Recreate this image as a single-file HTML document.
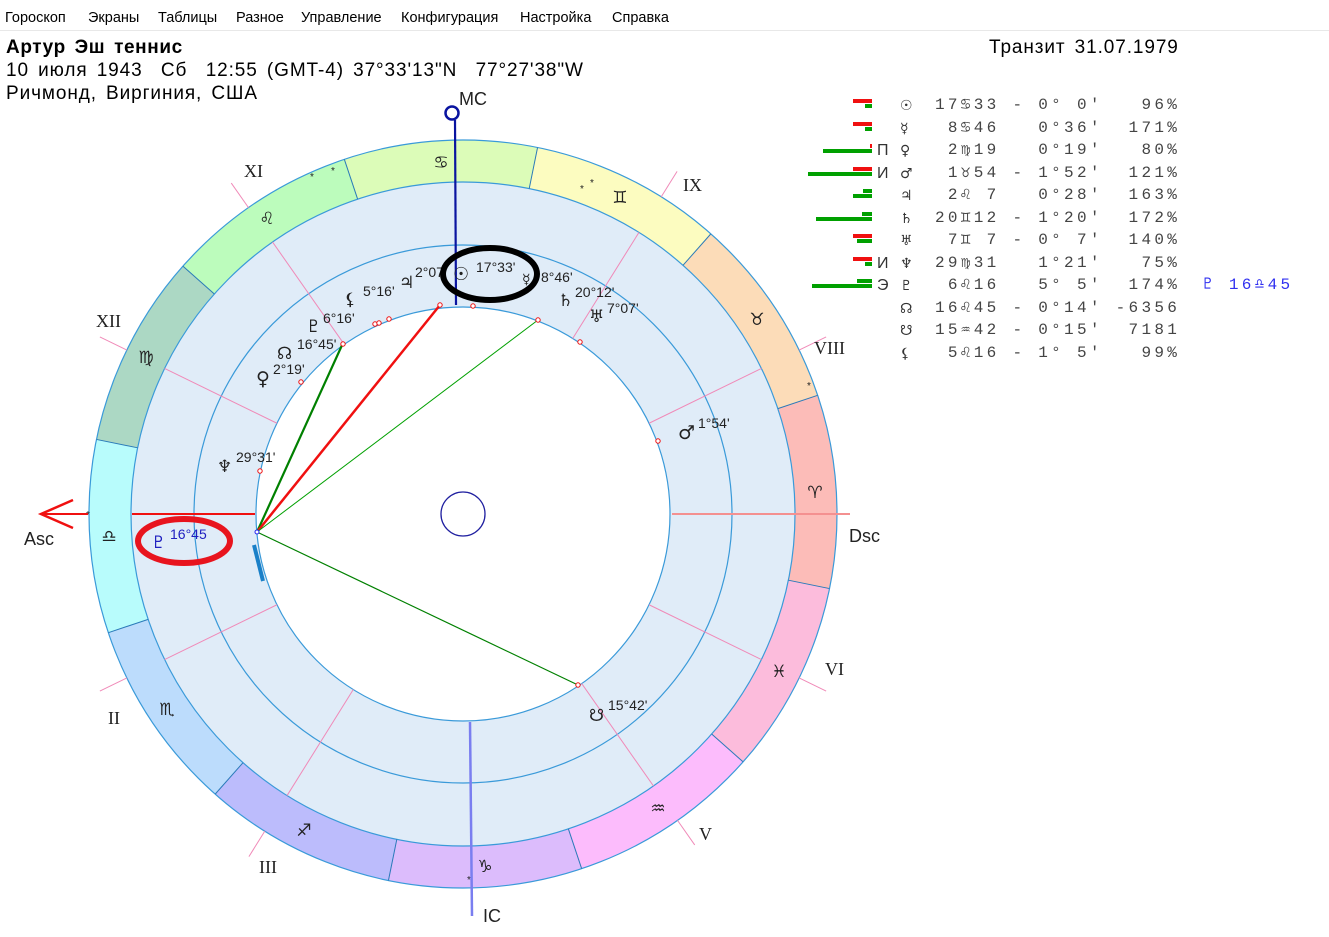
<!DOCTYPE html>
<html style="overflow:hidden"><head><meta charset="utf-8">
<style>
html,body{margin:0;width:1329px;height:937px;overflow:hidden;}
body{background:#fff;position:relative;font-family:"Liberation Sans","DejaVu Sans",sans-serif;}
.menu{position:absolute;left:0;top:0;width:1329px;height:30px;border-bottom:1px solid #e8e8e8;font-size:14.5px;color:#000;}
.menu span{position:absolute;top:10px;}
.hd{position:absolute;left:6px;font-size:19px;letter-spacing:0.9px;word-spacing:3px;color:#000;white-space:nowrap;}
svg{position:absolute;left:0;top:0;}
.tb{position:absolute;font-family:"Liberation Mono","DejaVu Sans Mono",monospace;font-size:16px;color:#444;white-space:pre;}
.bar{position:absolute;height:4px;}
.r{background:#f01010}.g{background:#00a000}
</style></head><body>
<div class="menu">
<span style="left:5px">Гороскоп</span><span style="left:88px">Экраны</span><span style="left:158px">Таблицы</span><span style="left:236px">Разное</span><span style="left:301px">Управление</span><span style="left:401px">Конфигурация</span><span style="left:520px">Настройка</span><span style="left:612px">Справка</span>
</div>
<div class="hd" style="top:37px;font-weight:bold;letter-spacing:0.6px">Артур Эш теннис</div>
<div class="hd" style="top:60px">10 июля 1943&nbsp; Сб&nbsp; 12:55 (GMT-4) 37°33'13"N&nbsp; 77°27'38"W</div>
<div class="hd" style="top:83px">Ричмонд, Виргиния, США</div>
<div class="hd" style="top:37px;left:989px">Транзит 31.07.1979</div>

<svg width="1329" height="937" viewBox="0 0 1329 937">
<g font-family="Liberation Sans, DejaVu Sans, sans-serif">
<circle cx="463" cy="514" r="374" fill="#e0ecf8"/>
<g transform="translate(463,514)" fill="none" stroke-width="42">
<circle r="353" stroke="#fcbcb8" stroke-dasharray="184.83 3000" transform="rotate(-18.5)"/>
<circle r="353" stroke="#fcdcb8" stroke-dasharray="184.83 3000" transform="rotate(-48.5)"/>
<circle r="353" stroke="#fcfcc0" stroke-dasharray="184.83 3000" transform="rotate(-78.5)"/>
<circle r="353" stroke="#dcfcb8" stroke-dasharray="184.83 3000" transform="rotate(-108.5)"/>
<circle r="353" stroke="#bcfcbc" stroke-dasharray="184.83 3000" transform="rotate(-138.5)"/>
<circle r="353" stroke="#acd8c4" stroke-dasharray="184.83 3000" transform="rotate(-168.5)"/>
<circle r="353" stroke="#b8fcfc" stroke-dasharray="184.83 3000" transform="rotate(-198.5)"/>
<circle r="353" stroke="#bcdcfc" stroke-dasharray="184.83 3000" transform="rotate(-228.5)"/>
<circle r="353" stroke="#bcbcfc" stroke-dasharray="184.83 3000" transform="rotate(-258.5)"/>
<circle r="353" stroke="#dcbcfc" stroke-dasharray="184.83 3000" transform="rotate(-288.5)"/>
<circle r="353" stroke="#fcbcfc" stroke-dasharray="184.83 3000" transform="rotate(-318.5)"/>
<circle r="353" stroke="#fcbcdc" stroke-dasharray="184.83 3000" transform="rotate(-348.5)"/>
</g>
<circle cx="463" cy="514" r="207" fill="#fff"/>
<g fill="none" stroke="#3a9ad9" stroke-width="1.2">
<circle cx="463" cy="514" r="374"/><circle cx="463" cy="514" r="332"/><circle cx="463" cy="514" r="269"/><circle cx="463" cy="514" r="207"/>
</g>
<g transform="translate(463,514)" stroke="#2a7ab9" stroke-width="1">
<line x1="332" x2="374" transform="rotate(11.5)"/><line x1="332" x2="374" transform="rotate(-18.5)"/><line x1="332" x2="374" transform="rotate(-48.5)"/><line x1="332" x2="374" transform="rotate(-78.5)"/><line x1="332" x2="374" transform="rotate(-108.5)"/><line x1="332" x2="374" transform="rotate(-138.5)"/><line x1="332" x2="374" transform="rotate(-168.5)"/><line x1="332" x2="374" transform="rotate(-198.5)"/><line x1="332" x2="374" transform="rotate(-228.5)"/><line x1="332" x2="374" transform="rotate(-258.5)"/><line x1="332" x2="374" transform="rotate(-288.5)"/><line x1="332" x2="374" transform="rotate(-318.5)"/>
</g>
<g transform="translate(463,514)" stroke="#f08ab8" stroke-width="1">
<g transform="rotate(-154)"><line x1="207" x2="332"/><line x1="374" x2="404"/></g>
<g transform="rotate(-125)"><line x1="207" x2="332"/><line x1="374" x2="404"/></g>
<g transform="rotate(-58)"><line x1="207" x2="332"/><line x1="374" x2="404"/></g>
<g transform="rotate(-26)"><line x1="207" x2="332"/><line x1="374" x2="404"/></g>
<g transform="rotate(26)"><line x1="207" x2="332"/><line x1="374" x2="404"/></g>
<g transform="rotate(55)"><line x1="207" x2="332"/><line x1="374" x2="404"/></g>
<g transform="rotate(122)"><line x1="207" x2="332"/><line x1="374" x2="404"/></g>
<g transform="rotate(154)"><line x1="207" x2="332"/><line x1="374" x2="404"/></g>
</g>
<g font-family="DejaVu Sans, sans-serif" font-size="17" fill="#222" text-anchor="middle">
<text x="815" y="498">♈&#xFE0E;</text><text x="757" y="325">♉&#xFE0E;</text><text x="620" y="203">♊&#xFE0E;</text><text x="441" y="168">♋&#xFE0E;</text><text x="267" y="224">♌&#xFE0E;</text><text x="146" y="363">♍&#xFE0E;</text><text x="109" y="542">♎&#xFE0E;</text><text x="167" y="715">♏&#xFE0E;</text><text x="304" y="836">♐&#xFE0E;</text><text x="485" y="872">♑&#xFE0E;</text><text x="658" y="814">♒&#xFE0E;</text><text x="779" y="677">♓&#xFE0E;</text>
</g>
<g font-size="10" fill="#222"><text x="310" y="180">*</text><text x="331" y="174">*</text><text x="580" y="192">*</text><text x="590" y="186">*</text><text x="807" y="389">*</text><text x="86" y="518">*</text><text x="467" y="883">*</text></g>
<line x1="40" y1="514" x2="88" y2="514" stroke="#f01010" stroke-width="2"/>
<line x1="132" y1="514" x2="255" y2="514" stroke="#f01010" stroke-width="2"/>
<polyline points="73,500 41,514 73,528" fill="none" stroke="#f01010" stroke-width="2.5"/>
<line x1="672" y1="514" x2="850" y2="514" stroke="#f49090" stroke-width="2"/>
<line x1="455" y1="120" x2="456" y2="305" stroke="#0a14a0" stroke-width="2.2"/>
<circle cx="452" cy="113" r="6.5" fill="#fff" stroke="#0a14a0" stroke-width="2.5"/>
<line x1="470" y1="722" x2="472" y2="916" stroke="#7a7ef0" stroke-width="2.5"/>
<circle cx="463" cy="514" r="22" fill="none" stroke="#2020a0" stroke-width="1.3"/>
<line x1="257" y1="532" x2="343" y2="343" stroke="#008000" stroke-width="2.2"/>
<line x1="257" y1="532" x2="440" y2="305" stroke="#f01010" stroke-width="2.5"/>
<line x1="257" y1="532" x2="538" y2="320" stroke="#00a000" stroke-width="1"/>
<line x1="257" y1="532" x2="578" y2="685" stroke="#008000" stroke-width="1.2"/>
<line x1="254" y1="545" x2="263" y2="581" stroke="#1a80c8" stroke-width="4"/>
<circle cx="257" cy="532" r="2" fill="#fff" stroke="#2020f0"/>
<g fill="#fff" stroke="#f01010" stroke-width="1">
<circle cx="440" cy="305" r="2.2"/><circle cx="473" cy="306" r="2.2"/><circle cx="538" cy="320" r="2.2"/><circle cx="580" cy="342" r="2.2"/><circle cx="658" cy="441" r="2.2"/><circle cx="578" cy="685" r="2.2"/><circle cx="343" cy="344" r="2.2"/><circle cx="375" cy="324" r="2.2"/><circle cx="379" cy="323" r="2.2"/><circle cx="389" cy="319" r="2.2"/><circle cx="301" cy="382" r="2.2"/><circle cx="260" cy="471" r="2.2"/>
</g>
<g font-size="17" fill="#222" font-family="DejaVu Sans, sans-serif">
<text x="453" y="280" font-size="18">☉</text><text x="476" y="272" font-size="14" font-family="Liberation Sans">17°33'</text>
<text x="522" y="284" font-size="14">☿</text><text x="541" y="282" font-size="14" font-family="Liberation Sans">8°46'</text>
<text x="558" y="306">♄</text><text x="575" y="297" font-size="14" font-family="Liberation Sans">20°12'</text>
<text x="589" y="322">♅</text><text x="607" y="313" font-size="14" font-family="Liberation Sans">7°07'</text>
<text x="678" y="439" font-size="19">♂</text><text x="698" y="428" font-size="14" font-family="Liberation Sans">1°54'</text>
<text x="589" y="721">☋</text><text x="608" y="710" font-size="14" font-family="Liberation Sans">15°42'</text>
<text x="217" y="472">♆</text><text x="236" y="462" font-size="14" font-family="Liberation Sans">29°31'</text>
<text x="256" y="385" font-size="19">♀</text><text x="273" y="374" font-size="14" font-family="Liberation Sans">2°19'</text>
<text x="277" y="359">☊</text><text x="297" y="349" font-size="14" font-family="Liberation Sans">16°45'</text>
<text x="306" y="332">♇</text><text x="323" y="323" font-size="14" font-family="Liberation Sans">6°16'</text>
<text x="344" y="305">⚸</text><text x="363" y="296" font-size="14" font-family="Liberation Sans">5°16'</text>
<text x="399" y="288">♃</text><text x="415" y="277" font-size="14" font-family="Liberation Sans">2°07'</text>
<text x="151" y="548" fill="#2020c0">♇</text><text x="170" y="539" font-size="14" fill="#2020c0" font-family="Liberation Sans">16°45</text>
</g>
<ellipse cx="490" cy="274" rx="47" ry="26" fill="none" stroke="#000" stroke-width="6"/>
<ellipse cx="184" cy="541" rx="46" ry="22" fill="none" stroke="#e8141e" stroke-width="6"/>
<g font-size="18" fill="#222">
<text x="24" y="545">Asc</text><text x="849" y="542">Dsc</text><text x="459" y="105">MC</text><text x="483" y="922">IC</text>
</g>
<g font-size="18" fill="#222" font-family="Liberation Serif, serif">
<text x="244" y="177">XI</text><text x="683" y="191">IX</text><text x="96" y="327">XII</text><text x="814" y="354">VIII</text><text x="108" y="724">II</text><text x="259" y="873">III</text><text x="699" y="840">V</text><text x="825" y="675">VI</text>
</g>
</g>
</svg>

<div class="bar r" style="left:853px;top:99px;width:19px"></div><div class="bar g" style="left:865px;top:104px;width:7px"></div>
<div class="bar r" style="left:853px;top:122px;width:19px"></div><div class="bar g" style="left:865px;top:127px;width:7px"></div>
<div class="bar r" style="left:870px;top:144px;width:2px"></div><div class="bar g" style="left:823px;top:149px;width:49px"></div>
<div class="bar r" style="left:853px;top:167px;width:19px"></div><div class="bar g" style="left:808px;top:172px;width:64px"></div>
<div class="bar g" style="left:863px;top:189px;width:9px"></div><div class="bar g" style="left:853px;top:194px;width:19px"></div>
<div class="bar g" style="left:862px;top:212px;width:10px"></div><div class="bar g" style="left:816px;top:217px;width:56px"></div>
<div class="bar r" style="left:853px;top:234px;width:19px"></div><div class="bar g" style="left:857px;top:239px;width:15px"></div>
<div class="bar r" style="left:853px;top:257px;width:19px"></div><div class="bar g" style="left:865px;top:262px;width:7px"></div>
<div class="bar g" style="left:857px;top:279px;width:15px"></div><div class="bar g" style="left:812px;top:284px;width:60px"></div>

<div class="tb" style="left:877px;top:95px;line-height:22.5px;font-family:'Liberation Sans',sans-serif;font-size:16px;color:#333">

П
И



И
Э</div>
<div class="tb" style="left:900px;top:95px;line-height:22.5px;font-family:'DejaVu Sans',sans-serif;font-size:14px;color:#333">☉
☿
♀
♂
♃
♄
♅
♆
♇
☊
☋
⚸</div>
<div class="tb" style="left:935px;top:94px;line-height:22.5px;letter-spacing:3.3px">17♋33 - 0° 0'   96%
 8♋46   0°36'  171%
 2♍19   0°19'   80%
 1♉54 - 1°52'  121%
 2♌ 7   0°28'  163%
20♊12 - 1°20'  172%
 7♊ 7 - 0° 7'  140%
29♍31   1°21'   75%
 6♌16   5° 5'  174%
16♌45 - 0°14' -6356
15♒42 - 0°15'  7181
 5♌16 - 1° 5'   99%</div>
<div class="tb" style="left:1203px;top:274px;letter-spacing:3.3px;color:#3030f0">♇ 16♎45</div>
</body></html>
